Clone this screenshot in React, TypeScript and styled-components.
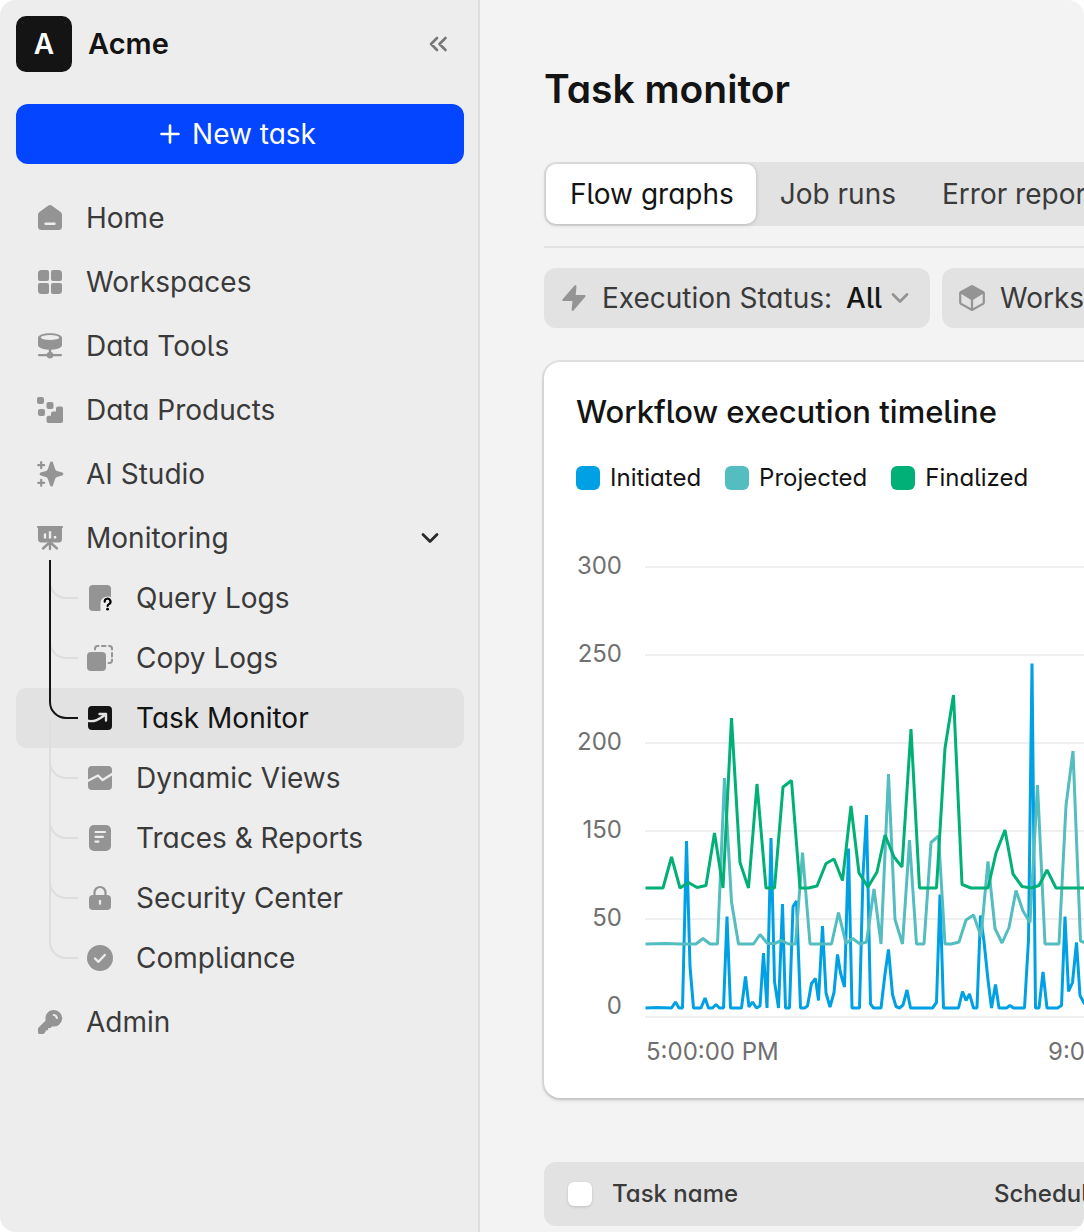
import React from "react";
import styled, { createGlobalStyle, css } from "styled-components";

const color = {
  ink: "#141414",
  text: "#3a3a3a",
  muted: "#707070",
  icon: "#949494",
  sidebar: "#ededed",
  page: "#f3f3f3",
  fill: "#e2e2e2",
  line: "#dddddd",
  grid: "#efefef",
  primary: "#0446ff",
  initiated: "#00a0e4",
  projected: "#53bdc0",
  finalized: "#00b077",
};

const GlobalStyle = createGlobalStyle`
  *, *::before, *::after { box-sizing: border-box; }
  body {
    margin: 0;
    background: #ffffff;
    color: ${color.ink};
    font-family: Inter, "Liberation Sans", sans-serif;
    font-feature-settings: "cv11", "cv05";
    font-size: 28px;
    line-height: 36px;
    -webkit-font-smoothing: antialiased;
  }
  button, select, input { font: inherit; font-feature-settings: inherit; color: inherit; }
`;

const Shell = styled.div`
  display: grid;
  grid-template-columns: 480px minmax(0, 1fr);
  min-height: 100vh;
  border-radius: 16px;
  overflow: hidden;
  background: ${color.page};
`;

const Sidebar = styled.aside`
  display: flex;
  flex-direction: column;
  padding: 16px 14px 16px 16px;
  background: ${color.sidebar};
  border-right: 2px solid ${color.line};
`;

const Brand = styled.header`
  display: flex;
  align-items: center;
  gap: 16px;
  margin-bottom: 32px;
  padding-right: 14px;
`;

const BrandMark = styled.span`
  display: grid;
  place-items: center;
  width: 56px;
  height: 56px;
  border-radius: 10px;
  background: ${color.ink};
  color: #ffffff;
  font-weight: 600;
`;

const BrandName = styled.span`
  flex: 1;
  font-size: 29px;
  font-weight: 600;
`;

const IconButton = styled.button`
  display: flex;
  padding: 0;
  border: 0;
  background: none;
  color: #777777;
  cursor: pointer;
`;

const PrimaryButton = styled.button`
  display: flex;
  align-items: center;
  justify-content: center;
  height: 60px;
  margin-bottom: 24px;
  border: 0;
  border-radius: 12px;
  background: ${color.primary};
  color: #ffffff;
  cursor: pointer;

  span { padding: 0 8px; }
`;

const NavList = styled.ul`
  display: flex;
  flex-direction: column;
  gap: 4px;
  margin: 0;
  padding: 0;
  list-style: none;
`;

const SubList = styled.ul`
  position: relative;
  margin: 0;
  padding: 0;
  list-style: none;
`;

const NavLink = styled.a<{ $nested?: boolean; $active?: boolean }>`
  display: flex;
  align-items: center;
  gap: 22px;
  height: 60px;
  padding: 0 20px 0 ${(p) => (p.$nested ? 70 : 20)}px;
  border-radius: 10px;
  color: ${color.text};
  text-decoration: none;

  svg { flex: none; color: ${color.icon}; }

  ${(p) =>
    p.$active &&
    css`
      background: ${color.fill};
      color: ${color.ink};
      svg { color: ${color.ink}; }
    `}
`;

const NavText = styled.span`
  flex: 1;
`;

const Branches = styled.svg`
  position: absolute;
  top: -8px;
  left: 32px;
  pointer-events: none;
`;

const Main = styled.main`
  min-width: 0;
  padding: 64px 0 6px 64px;
  overflow: hidden;
`;

const Content = styled.div`
  min-width: 1120px;
`;

const PageTitle = styled.h1`
  margin: 0 0 48px;
  font-size: 39px;
  line-height: 50px;
  font-weight: 600;
`;

const TabStrip = styled.div`
  display: flex;
  padding: 2px;
  border-radius: 12px;
  background: ${color.fill};
`;

const Tab = styled.button<{ $active?: boolean }>`
  height: 60px;
  padding: 0 22px 0 24px;
  border: 0;
  border-radius: 10px;
  background: none;
  color: ${color.text};
  white-space: nowrap;
  cursor: pointer;

  ${(p) =>
    p.$active &&
    css`
      background: #ffffff;
      color: ${color.ink};
      box-shadow: 0 1px 4px rgba(0, 0, 0, 0.2);
    `}
`;

const Divider = styled.hr`
  height: 2px;
  margin: 20px 0;
  border: 0;
  background: ${color.fill};
`;

const Filters = styled.div`
  display: flex;
  gap: 12px;
  margin-bottom: 34px;
`;

const Filter = styled.label`
  display: flex;
  align-items: center;
  height: 60px;
  padding: 0 16px;
  border-radius: 12px;
  background: ${color.fill};
  color: ${color.text};
  white-space: nowrap;

  svg { flex: none; color: ${color.icon}; }
`;

const FilterName = styled.span`
  margin: 0 14px;
`;

const FilterSelect = styled.select`
  appearance: none;
  field-sizing: content;
  margin: 0;
  padding: 0 4px 0 0;
  border: 0;
  background: none;
  color: ${color.ink};
  font-weight: 500;
`;

const Card = styled.section`
  margin-bottom: 64px;
  padding: 32px 32px 28px;
  border-radius: 16px;
  background: #ffffff;
  box-shadow: 0 0 0 2px rgba(0, 0, 0, 0.07), 0 2px 4px rgba(0, 0, 0, 0.16);
`;

const CardTitle = styled.h2`
  margin: 0 0 30px;
  font-size: 31px;
  line-height: 36px;
  font-weight: 500;
`;

const Legend = styled.ul`
  display: flex;
  gap: 24px;
  margin: 0 0 24px;
  padding: 0;
  list-style: none;
  font-size: 24px;
`;

const LegendItem = styled.li<{ $color: string }>`
  display: flex;
  align-items: center;
  gap: 10px;

  &::before {
    content: "";
    width: 24px;
    height: 24px;
    border-radius: 6px;
    background: ${(p) => p.$color};
  }
`;

const Chart = styled.div`
  display: grid;
  grid-template-columns: 46px 1fr;
  column-gap: 22px;
  color: ${color.muted};
  font-size: 24px;
`;

const YAxis = styled.div`
  display: flex;
  flex-direction: column;
  gap: 48px;
  padding-top: 26px;
  text-align: right;
  line-height: 40px;
`;

const Plot = styled.svg`
  display: block;
  height: 514px;
  width: 100%;
`;

const XAxis = styled.div`
  grid-column: 2;
  display: grid;
  grid-template-columns: repeat(auto-fill, 402px);
  padding-left: 2px;
  white-space: nowrap;
`;

const Tasks = styled.table`
  width: 100%;
  table-layout: fixed;
  border-collapse: separate;
  border-spacing: 0;
  font-size: 24px;
  color: ${color.text};
`;

const HeadCell = styled.th<{ $width?: number }>`
  width: ${(p) => (p.$width ? `${p.$width}px` : "auto")};
  height: 64px;
  padding: 0;
  background: ${color.fill};
  text-align: left;
  font-weight: 500;

  &:first-child { padding-left: 24px; border-radius: 12px 0 0 12px; }
  &:last-child { border-radius: 0 12px 12px 0; }
`;

const Checkbox = styled.input`
  appearance: none;
  display: block;
  width: 24px;
  height: 24px;
  margin: 0;
  border-radius: 6px;
  background: #ffffff;
  box-shadow: 0 1px 3px rgba(0, 0, 0, 0.16);
`;

const Icon = ({ children, size = 28 }: { children: React.ReactNode; size?: number }) => (
  <svg width={size} height={size} viewBox={`0 0 ${size} ${size}`} fill="currentColor" aria-hidden="true">
    {children}
  </svg>
);

const stroke = (width: number, paint = "currentColor") => ({
  fill: "none",
  stroke: paint,
  strokeWidth: width,
  strokeLinecap: "round" as const,
  strokeLinejoin: "round" as const,
});

const HomeIcon = () => (
  <Icon>
    <path d="M12.4 1.6a2.8 2.8 0 0 1 3.2 0l9 6.4A3.4 3.4 0 0 1 26 10.800V22.500a3.500 3.500 0 0 1-3.500 3.500h-17A3.500 3.500 0 0 1 2 22.500V10.800a3.400 3.400 0 0 1 1.400-2.800z" />
    <path d="M9.500 19.700h9" {...stroke(2.4, color.sidebar)} />
  </Icon>
);

const WorkspacesIcon = () => (
  <Icon>
    <path d="M5.500 2h5.500a2 2 0 0 1 2 2v7a2 2 0 0 1-2 2H4a2 2 0 0 1-2-2V5.500A3.500 3.500 0 0 1 5.500 2zM17 2h5.500A3.500 3.500 0 0 1 26 5.500V11a2 2 0 0 1-2 2h-7a2 2 0 0 1-2-2V4a2 2 0 0 1 2-2zM4 15h7a2 2 0 0 1 2 2v7a2 2 0 0 1-2 2H5.500A3.500 3.500 0 0 1 2 22.500V17a2 2 0 0 1 2-2zM17 15h7a2 2 0 0 1 2 2v5.500a3.500 3.500 0 0 1-3.500 3.500H17a2 2 0 0 1-2-2v-7a2 2 0 0 1 2-2z" />
  </Icon>
);

const DataToolsIcon = () => (
  <Icon>
    <path d="M14 1.200c6.600 0 12 1.900 12 4.500v7.300c0 2.600-4.400 4.400-10.800 4.700v2.200a3.600 3.600 0 0 1 2.200 2.100H25a1 1 0 0 1 0 2.200h-7.600a3.600 3.600 0 0 1-6.800 0H3a1 1 0 0 1 0-2.200h7.600a3.600 3.600 0 0 1 2.200-2.100v-2.200C6.400 17.400 2 15.600 2 13V5.700c0-2.600 5.400-4.500 12-4.500z" />
    <ellipse cx="14" cy="5.600" rx="9.200" ry="2.500" fill={color.sidebar} />
  </Icon>
);

const DataProductsIcon = () => (
  <Icon>
    <rect x="1" y="1" width="7" height="7" rx="2" />
    <rect x="10.500" y="6" width="7" height="7" rx="2" />
    <rect x="2" y="13" width="7" height="7" rx="2" />
    <path d="M22 10.500h3a2 2 0 0 1 2 2V25a2 2 0 0 1-2 2H12.500a2 2 0 0 1-2-2v-3.200a2 2 0 0 1 2-2H15v-2.300a2 2 0 0 1 2-2h3v-3a2 2 0 0 1 2-2z" />
  </Icon>
);

const AiIcon = () => (
  <Icon>
    <path d="M14 2.700c.5-1.600 2.500-1.600 3 0l2.100 6.300a3 3 0 0 0 1.900 1.900l5.300 1.700c1.400.5 1.400 2.300 0 2.800L21 17.100a3 3 0 0 0-1.900 1.900L17 25.300c-.5 1.600-2.500 1.600-3 0L11.900 19a3 3 0 0 0-1.900-1.900l-5.300-1.700c-1.400-.5-1.400-2.300 0-2.800l5.300-1.700A3 3 0 0 0 11.900 9z" />
    <path d="M5.200 2.200v6M2.200 5.200h6M5.200 19.800v6M2.200 22.800h6" {...stroke(2.2)} />
  </Icon>
);

const MonitoringIcon = () => (
  <Icon>
    <path d="M2 2h24a1 1 0 0 1 0 2.200V15a3.500 3.500 0 0 1-3.500 3.500h-17A3.500 3.500 0 0 1 2 15V4.200A1 1 0 0 1 2 2z" />
    <path d="M9 9.500v5M14 7.200v7.300M19 12v2.500" fill="none" stroke={color.sidebar} strokeWidth="2.400" />
    <path d="M14 18v7M12.500 19.500 7 24.500M15.500 19.500l5.500 5" {...stroke(2.4)} />
  </Icon>
);

const QueryIcon = () => (
  <Icon>
    <rect x="3" y="1" width="22" height="26" rx="4" />
    <path d="M14.500 28v-8.500a7 7 0 0 1 13.500-2.500V28z" fill={color.sidebar} />
    <path d="M18.700 17.700a2.900 2.900 0 1 1 4.300 2.400c-1 .6-1.400 1-1.400 1.900" {...stroke(2.2, "#000000")} />
    <circle cx="21.600" cy="25.200" r="1.400" fill="#000000" />
  </Icon>
);

const CopyIcon = () => (
  <Icon>
    <rect x="1" y="8" width="19" height="19" rx="4" />
    <path d="M9 5.500V4.500A2.600 2.600 0 0 1 11.500 2h1M16 2h3.500M23 2h.5A2.600 2.600 0 0 1 26 4.500v1M26 9v3.500M26 15.500V16.500A2.600 2.600 0 0 1 23.500 19h-1" {...stroke(2)} />
  </Icon>
);

const TaskIcon = () => (
  <Icon>
    <rect x="2" y="2" width="24" height="24" rx="4" />
    <path d="M1.500 16.800C8.500 18.200 13 15.500 19.300 10.500" {...stroke(2.4, color.fill)} strokeLinecap="butt" />
    <path d="M13.500 10h6.500v6.500" {...stroke(2.4, color.fill)} />
  </Icon>
);

const ViewsIcon = () => (
  <Icon>
    <rect x="2" y="2" width="24" height="24" rx="4" />
    <path d="M1.500 17 12 11.500l4.500 4.500L27 9.500" {...stroke(2.4, color.sidebar)} strokeLinecap="butt" />
  </Icon>
);

const ReportsIcon = () => (
  <Icon>
    <rect x="3" y="1" width="22" height="26" rx="5" />
    <path d="M9.500 8h9.500M9.500 12.800H17M9.500 17.600h3" {...stroke(2.2, color.sidebar)} />
  </Icon>
);

const LockIcon = () => (
  <Icon>
    <path d="M8.500 12V8.500a5.500 5.500 0 0 1 11 0V12" {...stroke(2.2)} />
    <rect x="3" y="11" width="22" height="15" rx="4" />
    <path d="M14 16.800v3" {...stroke(2.2, color.sidebar)} />
  </Icon>
);

const ComplianceIcon = () => (
  <Icon>
    <circle cx="14" cy="14" r="13" />
    <path d="m9 14.500 3.500 3.300 6.300-6.800" {...stroke(2.4, color.sidebar)} />
  </Icon>
);

const KeyIcon = () => (
  <Icon>
    <path d="M17.700 2a8.300 8.300 0 1 1-1.600 16.400l-1.600 1.600h-2.300v2.200H9.800v1.300L7.500 26H3.500A1.500 1.500 0 0 1 2 24.500v-3.600a2 2 0 0 1 .6-1.400l7.100-7.100A8.300 8.300 0 0 1 17.700 2z" />
    <path d="M17.800 7a3.400 3.400 0 0 1 3 3" {...stroke(2.2, color.sidebar)} />
  </Icon>
);

const BoltIcon = () => (
  <Icon>
    <path d="M14.500 1.600c.7-.9 2-.4 2 .8L15.700 11H24.500a1 1 0 0 1 .8 1.700L13.500 26.500c-.7.8-2 .3-1.900-.8L12.500 17H3.400a1 1 0 0 1-.8-1.700z" />
  </Icon>
);

const CubeIcon = () => (
  <Icon>
    <path d="M12.700 1.400a2.600 2.600 0 0 1 2.600 0l10.500 5.900c.9.500.9 1.500 0 2l-10.500 6.400a2.600 2.600 0 0 1-2.600 0L2.200 9.300c-.9-.5-.9-1.500 0-2z" />
    <path d="M2.200 9v9.400c0 .7.300 1.200.9 1.500L14 26l10.900-6.100c.6-.3.900-.8.900-1.500V9M14 15v11" {...stroke(2.2)} />
  </Icon>
);

const CollapseIcon = () => (
  <Icon size={24}>
    <path d="m11 6-6 6 6 6M19.500 6l-6 6 6 6" {...stroke(2.6)} />
  </Icon>
);

const PlusIcon = () => (
  <Icon>
    <path d="M14 5.500v17M5.500 14h17" {...stroke(2.6)} />
  </Icon>
);

const ChevronDown = ({ tint }: { tint: string }) => (
  <Icon>
    <path d="m7 10.500 7 7 7-7" {...stroke(2.8, tint)} />
  </Icon>
);

const primaryNav = [
  { label: "Home", icon: <HomeIcon /> },
  { label: "Workspaces", icon: <WorkspacesIcon /> },
  { label: "Data Tools", icon: <DataToolsIcon /> },
  { label: "Data Products", icon: <DataProductsIcon /> },
  { label: "AI Studio", icon: <AiIcon /> },
];

const monitoringNav = [
  { label: "Query Logs", icon: <QueryIcon /> },
  { label: "Copy Logs", icon: <CopyIcon /> },
  { label: "Task Monitor", icon: <TaskIcon />, active: true },
  { label: "Dynamic Views", icon: <ViewsIcon /> },
  { label: "Traces & Reports", icon: <ReportsIcon /> },
  { label: "Security Center", icon: <LockIcon /> },
  { label: "Compliance", icon: <ComplianceIcon /> },
];

const branchPath = (index: number) => `V${index * 60 + 22}a16 16 0 0 0 16 16h12`;

const series = [
  {
    name: "Initiated",
    color: color.initiated,
    points:
      "1.5,488 13,487.5 27.5,488 31.5,482 35,488 38.5,488 42.5,321 46,446.5 49.5,488 57,488 61,478 64.5,488 68.5,488 72,484.5 75.5,488 79.5,488 83,396.5 86.5,488 97.5,488 101.5,456.5 105,487 108.5,482 112.5,488 116,486 119.5,433 123,488 127,318 130.5,461.5 134.5,488 138.5,384 141.5,488 145.5,488 149,386.5 152.5,381 156.5,488 160.5,488 163.5,486 167.5,463.5 171.5,458.5 174.5,480.5 178.5,406 182,473 186,487 190,472.5 193.5,434.5 196.5,453 200.5,467 204.5,328.5 208,488 215.5,488 219,355 222.5,295 226.5,484 229.5,488 237,488 241,454 244.5,429.5 248.5,474.5 252,486.5 255.5,488 259,485 263,470 266.5,488 288.5,488 292.5,482.5 296,374.5 299.5,488 314.5,488 318.5,471.5 322,480.5 325.5,474 329.5,488 333,488 336.5,395.5 340,421.5 344,460 347.5,488 351.5,464.5 355,488 362.5,488 366,485.5 369.5,488 380.5,488 384.5,420 388,143.5 391.5,488 395,488 399,452 403,488 413.5,488 417.5,485.5 421,396.5 424.5,471.5 428.5,462.5 432.5,422.5 436,475.5 440,483 444,488",
  },
  {
    name: "Projected",
    color: color.projected,
    points:
      "1.5,424 22.5,423.5 36,424 52,424 59,418.5 66,424 73.5,424 80.5,258 87.5,382 94.5,424 109.5,424 116,414.5 123.5,423.5 130.5,423.5 137.5,420.5 144.5,424 151.5,424 158.5,332.5 166,424 187.5,424 194.5,392.5 202,423.5 208.5,418.5 216,424 222.5,422 230,369 237,424 244.5,254 251,399.5 258.5,424 265.5,320 272.5,424 280,424 287,322.5 294.5,316 301,424 307.5,424 315,422 322,400 329.5,395 337,416.5 344,341.5 351,408.5 358,423 365,407.5 372,370.5 379,391 386,402.5 393.5,265 401,424 415,424 422,285.5 429,231 436.5,421 444,424",
  },
  {
    name: "Finalized",
    color: color.finalized,
    points:
      "1.5,368 19,368 27.5,337 36,368 44.5,362.5 53,367.5 62,365.5 70.5,313 79,368 87.5,198 96,342.5 104.5,368 113,264 122,368 130.5,368 139,267 147.5,260.5 156,368 164.5,368 173,366 182,343.5 190,339 198.5,360.5 207,286 215,353 224,367 233,352 241,315 250,337 258,347 267,209 275.5,368 292.5,368 301,228 309.5,175 318,364.5 327,368 344,368 352,333 361,310 369,354 378,366.5 387,368 395,365.5 403,350 412,368 444,368",
  },
];

const gridLines = [47, 135, 223, 311, 399, 497];
const yLabels = ["300", "250", "200", "150", "50", "0"];
const xLabels = ["5:00:00 PM", "9:00:00 PM"];
const tabs = ["Flow graphs", "Job runs", "Error reports"];

export default function App() {
  const activeIndex = monitoringNav.findIndex((item) => item.active);

  return (
    <>
      <GlobalStyle />
      <Shell>
        <Sidebar>
          <Brand>
            <BrandMark>A</BrandMark>
            <BrandName>Acme</BrandName>
            <IconButton aria-label="Collapse sidebar">
              <CollapseIcon />
            </IconButton>
          </Brand>
          <PrimaryButton>
            <PlusIcon />
            <span>New task</span>
          </PrimaryButton>
          <nav>
            <NavList>
              {primaryNav.map((item) => (
                <li key={item.label}>
                  <NavLink href="#">
                    {item.icon}
                    <NavText>{item.label}</NavText>
                  </NavLink>
                </li>
              ))}
              <li>
                <NavLink href="#">
                  <MonitoringIcon />
                  <NavText>Monitoring</NavText>
                  <ChevronDown tint="#2a2a2a" />
                </NavLink>
                <SubList>
                  {monitoringNav.map((item) => (
                    <li key={item.label}>
                      <NavLink href="#" $nested $active={item.active} aria-current={item.active ? "page" : undefined}>
                        {item.icon}
                        <NavText>{item.label}</NavText>
                      </NavLink>
                    </li>
                  ))}
                  <Branches width="32" height="404" fill="none" strokeWidth="2" aria-hidden="true">
                    {monitoringNav.map((item, index) => (
                      <path
                        key={item.label}
                        d={`M2 ${index > activeIndex ? Math.max(index * 60 - 38, 160) : index * 60 + 22}${branchPath(index)}`}
                        stroke={color.line}
                      />
                    ))}
                    <path d={`M2 0${branchPath(activeIndex)}`} stroke={color.ink} />
                  </Branches>
                </SubList>
              </li>
              <li>
                <NavLink href="#">
                  <KeyIcon />
                  <NavText>Admin</NavText>
                </NavLink>
              </li>
            </NavList>
          </nav>
        </Sidebar>

        <Main>
          <Content>
            <PageTitle>Task monitor</PageTitle>
            <TabStrip role="tablist">
              {tabs.map((tab, index) => (
                <Tab key={tab} role="tab" aria-selected={index === 0} $active={index === 0}>
                  {tab}
                </Tab>
              ))}
            </TabStrip>
            <Divider />
            <Filters>
              <Filter>
                <BoltIcon />
                <FilterName>Execution Status:</FilterName>
                <FilterSelect>
                  <option>All</option>
                </FilterSelect>
                <ChevronDown tint={color.icon} />
              </Filter>
              <Filter>
                <CubeIcon />
                <FilterName>Workspace:</FilterName>
                <FilterSelect>
                  <option>All</option>
                </FilterSelect>
                <ChevronDown tint={color.icon} />
              </Filter>
            </Filters>

            <Card>
              <CardTitle>Workflow execution timeline</CardTitle>
              <Legend>
                {series.map((s) => (
                  <LegendItem key={s.name} $color={s.color}>
                    {s.name}
                  </LegendItem>
                ))}
              </Legend>
              <Chart>
                <YAxis>
                  {yLabels.map((label) => (
                    <span key={label}>{label}</span>
                  ))}
                </YAxis>
                <Plot role="img" aria-label="Workflow executions over time">
                  {gridLines.map((y) => (
                    <line key={y} x1="1" x2="100%" y1={y} y2={y} stroke={color.grid} strokeWidth="2" />
                  ))}
                  {series.map((s) => (
                    <polyline
                      key={s.name}
                      points={s.points}
                      fill="none"
                      stroke={s.color}
                      strokeWidth="3"
                      strokeLinejoin="bevel"
                    />
                  ))}
                </Plot>
                <XAxis>
                  {xLabels.map((label) => (
                    <span key={label}>{label}</span>
                  ))}
                </XAxis>
              </Chart>
            </Card>

            <Tasks>
              <thead>
                <tr>
                  <HeadCell $width={68}>
                    <Checkbox type="checkbox" aria-label="Select all tasks" />
                  </HeadCell>
                  <HeadCell $width={382}>Task name</HeadCell>
                  <HeadCell>Schedule</HeadCell>
                </tr>
              </thead>
            </Tasks>
          </Content>
        </Main>
      </Shell>
    </>
  );
}
